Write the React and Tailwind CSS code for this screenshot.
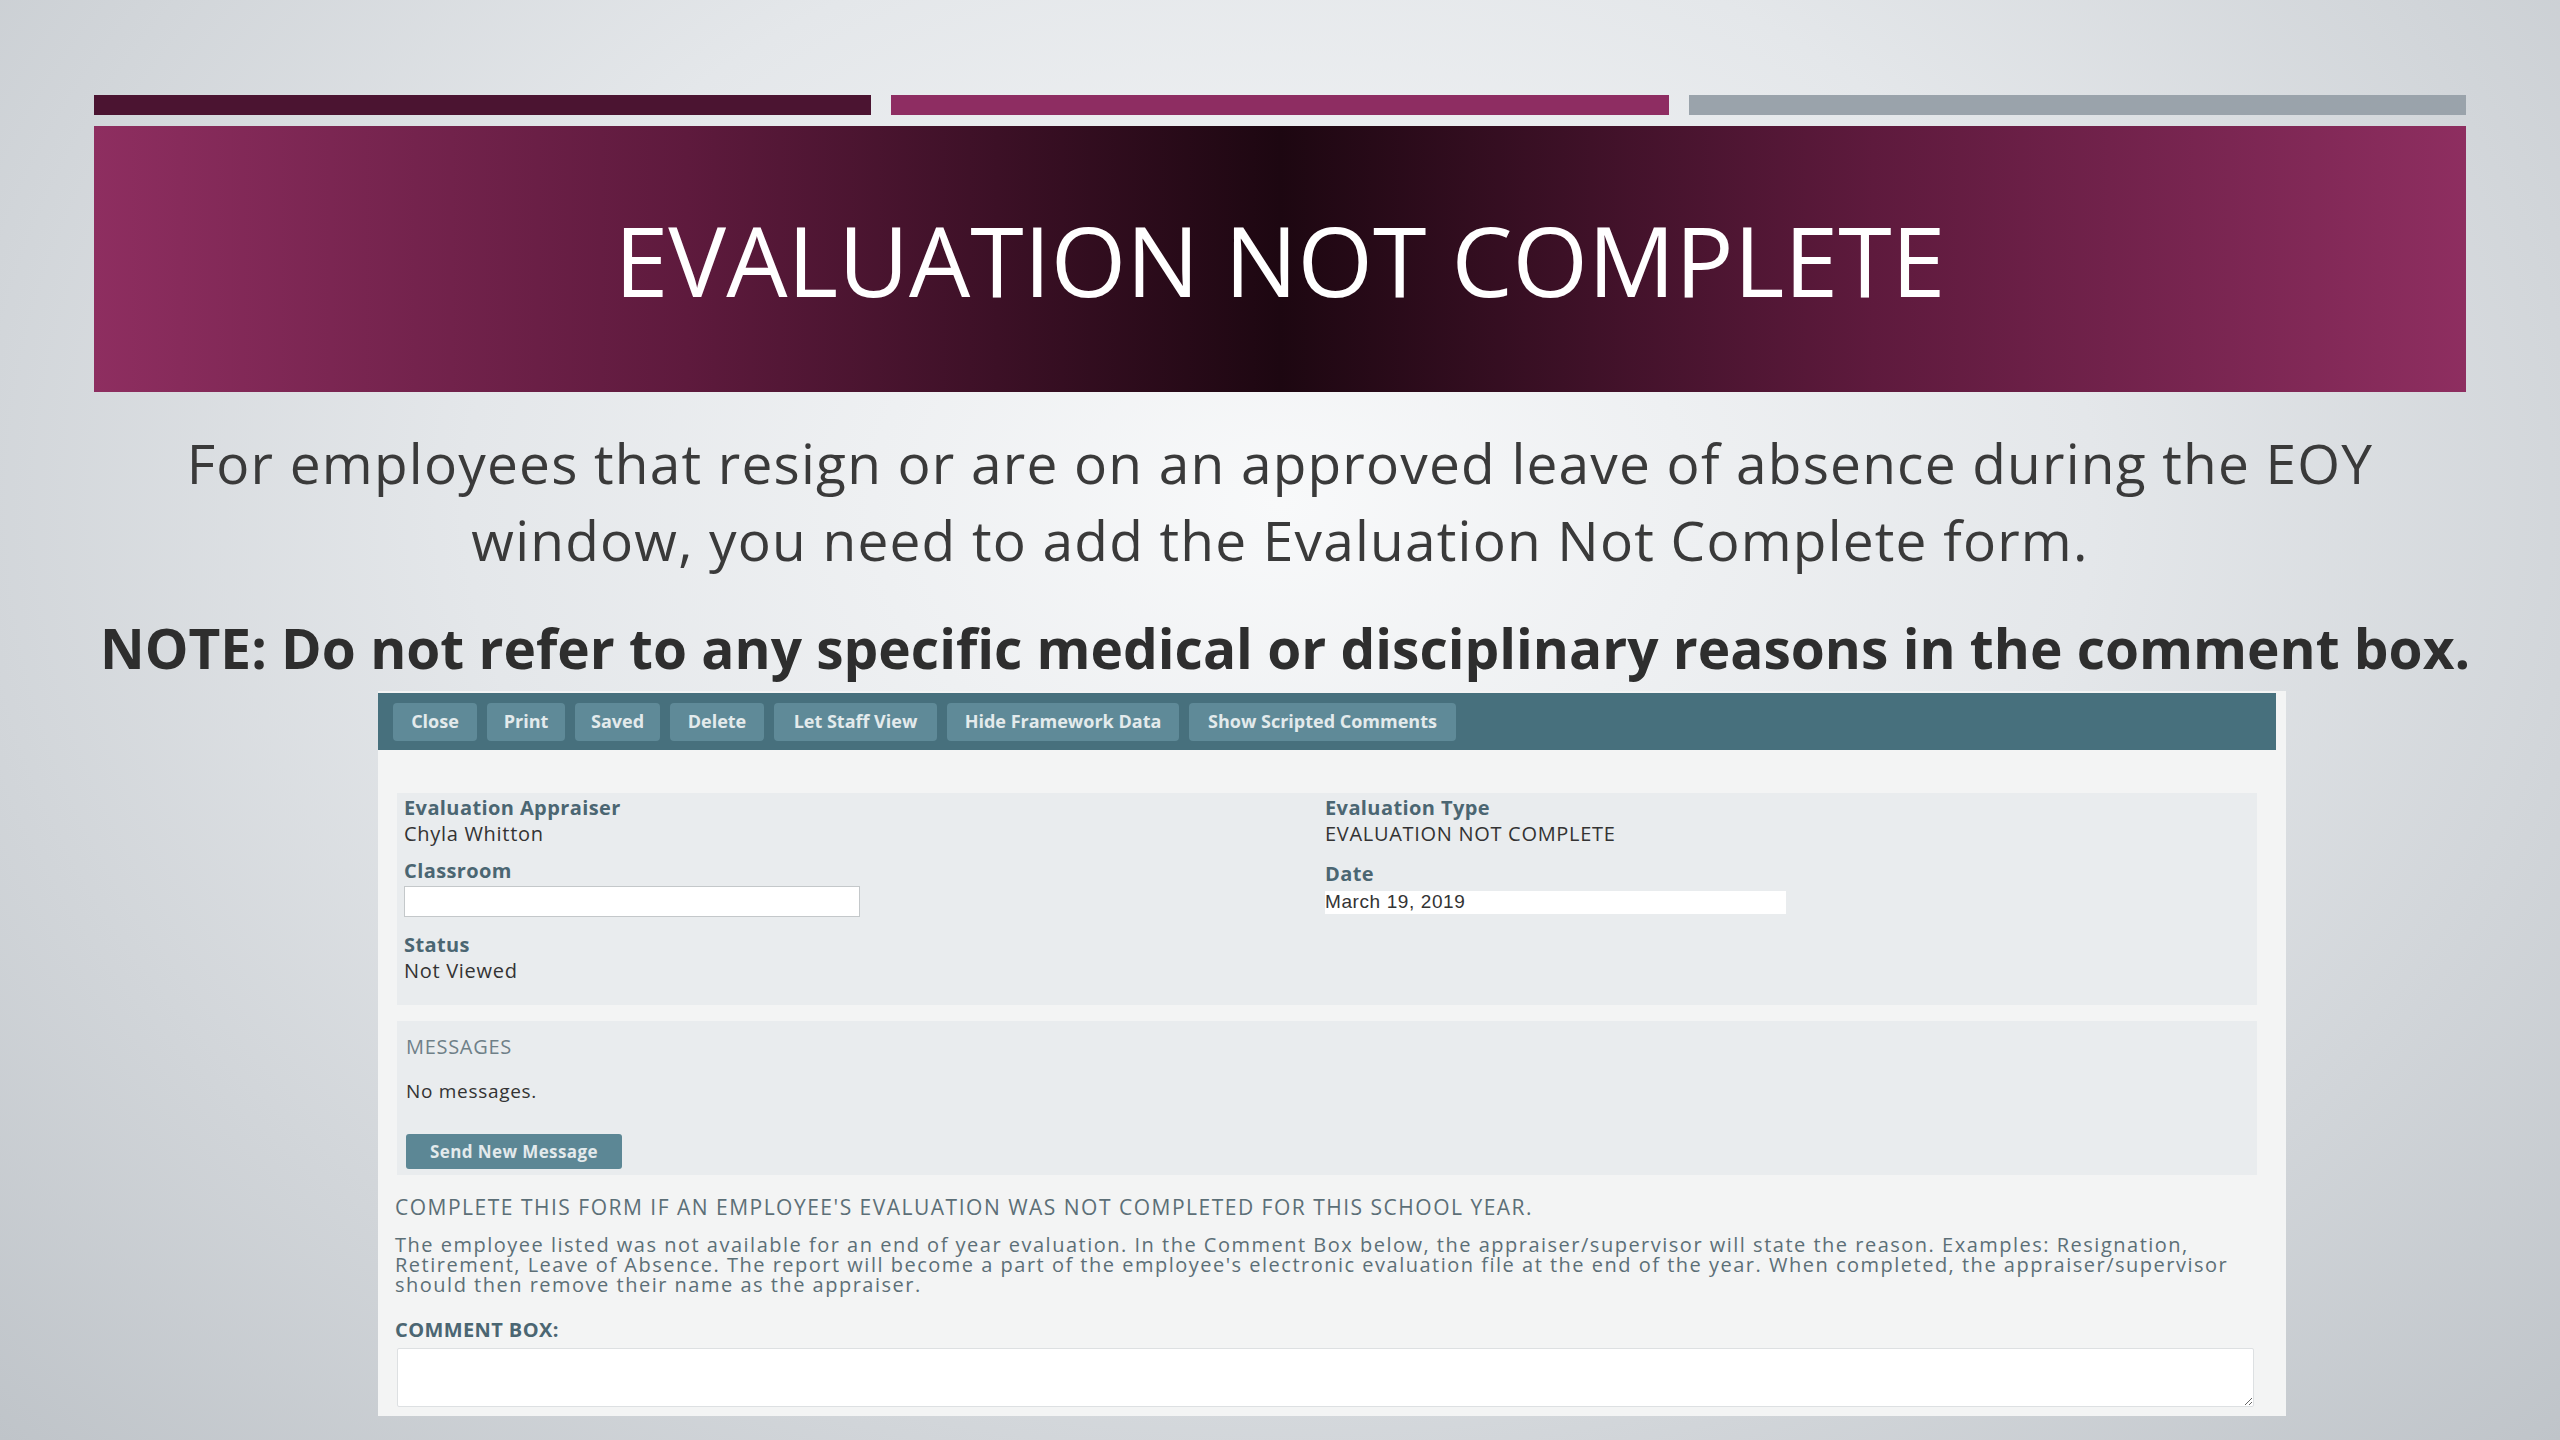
const toolbarButtons = [
  { label: 'Close', w: 'w-[84px]' },
  { label: 'Print', w: 'w-[78px]' },
  { label: 'Saved', w: 'w-[85px]' },
  { label: 'Delete', w: 'w-[94px]' },
  { label: 'Let Staff View', w: 'w-[163px]' },
  { label: 'Hide Framework Data', w: 'w-[232px]' },
  { label: 'Show Scripted Comments', w: 'w-[267px]' },
];

function Field({ label, children }) {
  return (
    <div>
      <div className="text-[20px] leading-[20px] font-bold tracking-[0.4px] text-[#4b6672]">{label}</div>
      {children}
    </div>
  );
}

function EvaluationForm() {
  return (
    <div className="ml-[378px] w-[1908px] h-[725px] mt-[5px] bg-[#f3f4f4] pt-[2px] font-['Open_Sans',sans-serif]">
      {/* toolbar */}
      <div className="mr-[10px] h-[57px] bg-[#47707d] flex items-center gap-[10px] pl-[15px]">
        {toolbarButtons.map((b) => (
          <button
            key={b.label}
            className={`${b.w} h-[38px] rounded-[4px] bg-[#5f8a98] text-[#e3eaec] text-[18px] font-bold flex items-center justify-center`}
          >
            {b.label}
          </button>
        ))}
      </div>

      {/* evaluation info */}
      <div className="mt-[43px] ml-[19px] w-[1860px] h-[212px] bg-[#e9ecee] pt-[5px] pl-[7px] grid grid-cols-[921px_1fr]">
        <div>
          <Field label="Evaluation Appraiser">
            <div className="mt-[6px] text-[20px] leading-[20px] tracking-[0.7px] text-[#333]">Chyla Whitton</div>
          </Field>
          <div className="mt-[17px]">
            <Field label="Classroom">
              <div className="mt-[5px] w-[456px] h-[31px] bg-white border border-[#c4c8ca]" />
            </Field>
          </div>
          <div className="mt-[18px]">
            <Field label="Status">
              <div className="mt-[6px] text-[20px] leading-[20px] tracking-[0.7px] text-[#333]">Not Viewed</div>
            </Field>
          </div>
        </div>
        <div>
          <Field label="Evaluation Type">
            <div className="mt-[6px] text-[20px] leading-[20px] tracking-[0.7px] text-[#333]">EVALUATION NOT COMPLETE</div>
          </Field>
          <div className="mt-[20px]">
            <Field label="Date">
              <div className="mt-[7px] w-[461px] h-[23px] bg-white flex items-center text-[19px] tracking-[0.6px] text-[#333] font-['Liberation_Sans',sans-serif]">
                March 19, 2019
              </div>
            </Field>
          </div>
        </div>
      </div>

      {/* messages */}
      <div className="mt-[16px] ml-[19px] w-[1860px] h-[154px] bg-[#e9ecee] pt-[16px] pl-[9px]">
        <div className="text-[20px] leading-[20px] tracking-[0.7px] text-[#6f8088]">MESSAGES</div>
        <div className="mt-[24px] text-[19px] leading-[20px] tracking-[0.7px] text-[#333]">No messages.</div>
        <button className="mt-[33px] w-[216px] h-[35px] rounded-[3px] bg-[#5c8795] text-[#e3eaec] text-[17px] font-bold tracking-[0.4px] flex items-center justify-center">
          Send New Message
        </button>
      </div>

      {/* instructions */}
      <div className="mt-[22px] pl-[17px] pr-[20px] text-[#5c6f77]">
        <div className="text-[21px] leading-[20px] tracking-[1.5px]">
          COMPLETE THIS FORM IF AN EMPLOYEE'S EVALUATION WAS NOT COMPLETED FOR THIS SCHOOL YEAR.
        </div>
        <div className="mt-[18px] text-[20px] leading-[20px] tracking-[1.5px] whitespace-nowrap">
          The employee listed was not available for an end of year evaluation. In the Comment Box below, the appraiser/supervisor will state the reason. Examples: Resignation,
          <br />
          Retirement, Leave of Absence. The report will become a part of the employee's electronic evaluation file at the end of the year. When completed, the appraiser/supervisor
          <br />
          should then remove their name as the appraiser.
        </div>
        <div className="mt-[25px] text-[20px] leading-[20px] font-bold tracking-[0.4px] text-[#4b6672]">COMMENT BOX:</div>
      </div>
      <textarea className="block mt-[8px] ml-[19px] w-[1857px] h-[59px] bg-white border border-[#dde0e2] rounded-[2px] resize-y" />
    </div>
  );
}

export default function App() {
  return (
    <div className="w-[2560px] h-[1440px] overflow-hidden bg-[radial-gradient(ellipse_at_50%_35%,#f8f9fa_0%,#e4e7ea_45%,#bfc4c9_100%)] font-['Open_Sans',sans-serif]">
      {/* accent bars */}
      <div className="pt-[95px] px-[94px] grid grid-cols-3 gap-[20px]">
        <div className="h-[20px] bg-[#4b1431]" />
        <div className="h-[20px] bg-[#8e2d62]" />
        <div className="h-[20px] bg-[#9aa3ab]" />
      </div>

      {/* title banner */}
      <div className="mt-[11px] mx-[94px] h-[266px] bg-[linear-gradient(to_right,#8e2e60_0%,#5e1a3d_25%,#1d0711_50%,#5e1a3d_75%,#8e2e60_100%)] flex items-center justify-center">
        <h1 className="text-[97px] leading-none font-normal text-white">EVALUATION NOT COMPLETE</h1>
      </div>

      {/* body copy */}
      <p className="mt-[32px] text-center text-[55px] leading-[77px] tracking-[1.2px] text-[#3a3a3a] whitespace-nowrap">
        For employees that resign or are on an approved leave of absence during the EOY
        <br />
        window, you need to add the Evaluation Not Complete form.
      </p>
      <p className="mt-[31px] ml-[100px] w-[2366px] text-center text-[55px] leading-[77px] font-bold text-[#2e2e2e] whitespace-nowrap">
        NOTE: Do not refer to any specific medical or disciplinary reasons in the comment box.
      </p>

      <EvaluationForm />
    </div>
  );
}
